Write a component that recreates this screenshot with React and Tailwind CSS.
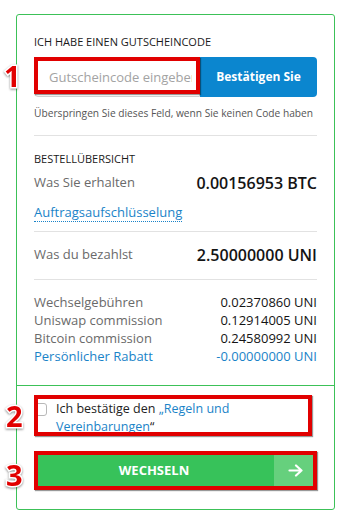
import React from 'react';

const Num = ({ n, className }) => (
  <div
    className={
      'absolute font-bold text-[29px] leading-none text-[#e10000] [paint-order:stroke_fill] [-webkit-text-stroke:3px_#fff] [filter:drop-shadow(0_1px_1px_rgba(0,0,0,0.45))] ' +
      className
    }
  >
    {n}
  </div>
);

const Row = ({ label, value, blue }) => (
  <div className="flex justify-between items-center h-[18px] text-[13px] leading-[18px]">
    <span className={blue ? 'text-[#1a83c8]' : 'text-[#6a6a6a]'}>{label}</span>
    <span className={blue ? 'text-[#1a83c8]' : 'text-[#141414] font-medium'}>{value}</span>
  </div>
);

export default function App() {
  return (
    <div className="relative w-[352px] h-[525px] bg-white overflow-hidden font-['Open_Sans',sans-serif]">
      <div className="ml-[16px] mt-[14px] w-[319px] h-[496px] border border-[#3cc158] rounded-[3px]">
        {/* Gutschein + Übersicht */}
        <div className="px-[17px] pt-[19px] h-[370px]">
          <div className="text-[11px] leading-[16px] text-[#1a1a1a] uppercase">Ich habe einen Gutscheincode</div>

          <div className="relative flex mt-[7px] h-[40px]">
            <input
              type="text"
              placeholder="Gutscheincode eingeben"
              className="w-[166px] h-full border border-[#cfcfcf] rounded-l-[4px] pl-[14px] pr-[7px] text-[13px] text-[#333] placeholder:text-[#a3a3a3] outline-none"
            />
            <button className="flex-1 h-full bg-[#0b86cf] rounded-r-[4px] text-white font-bold text-[12px]">
              Bestätigen Sie
            </button>
            <div className="absolute left-0 top-0 w-[166px] h-[37px] border-[4px] border-[#e10000] shadow-[1px_1px_1px_rgba(0,0,0,0.4)]" />
          </div>

          <div className="mt-[8px] text-[10.2px] leading-[16px] text-[#555]">
            Überspringen Sie dieses Feld, wenn Sie keinen Code haben
          </div>

          <div className="mt-[14px] h-px bg-[#e2e2e2]" />

          <div className="mt-[15px] text-[11px] leading-[16px] text-[#1a1a1a] uppercase">Bestellübersicht</div>
          <div className="mt-[5px] flex justify-between items-center h-[22px]">
            <span className="text-[13px] text-[#6a6a6a]">Was Sie erhalten</span>
            <span className="text-[16px] font-semibold text-[#141414]">0.00156953 BTC</span>
          </div>
          <div className="mt-[5px] h-[18px]">
            <span className="inline-block text-[13px] leading-[17px] text-[#1a83c8] border-b border-dotted border-[#1a83c8]">
              Auftragsaufschlüsselung
            </span>
          </div>

          <div className="mt-[14px] h-px bg-[#e2e2e2]" />

          <div className="mt-[12px] flex justify-between items-center h-[22px]">
            <span className="text-[13px] text-[#6a6a6a]">Was du bezahlst</span>
            <span className="text-[16px] font-semibold text-[#141414]">2.50000000 UNI</span>
          </div>

          <div className="mt-[13px] h-px bg-[#e2e2e2]" />

          <div className="mt-[13px]">
            <Row label="Wechselgebühren" value="0.02370860 UNI" />
            <Row label="Uniswap commission" value="0.12914005 UNI" />
            <Row label="Bitcoin commission" value="0.24580992 UNI" />
            <Row label="Persönlicher Rabatt" value="-0.00000000 UNI" blue />
          </div>
        </div>

        {/* Bestätigen + Wechseln */}
        <div className="border-t border-[#3cc158] px-[17px] pt-[9px]">
          <div className="relative h-[41px] pt-[5px]">
            <label className="flex items-start gap-[9px] text-[12.5px] leading-[18px] text-[#222]">
              <span className="mt-[3px] w-[13px] h-[13px] shrink-0 border border-[#b8b8b8] rounded-[3px] bg-white" />
              <span className="w-[240px]">
                Ich bestätige den <span className="text-[#1a83c8]">„Regeln und</span>{' '}
                <span className="text-[#1a83c8]">Vereinbarungen</span>“
              </span>
            </label>
            <div className="absolute left-0 top-0 w-[278px] h-[41px] border-[4px] border-[#e10000] shadow-[1px_1px_1px_rgba(0,0,0,0.4)]" />
          </div>

          <div className="relative mt-[15px] h-[39px]">
            <button className="flex w-full h-full rounded-[3px] overflow-hidden">
              <span className="flex-1 h-full bg-[#37c25a] flex items-center justify-center text-white font-bold text-[13px]">
                WECHSELN
              </span>
              <span className="w-[43px] h-full bg-[#66d07d] flex items-center justify-center">
                <svg width="15" height="13" viewBox="0 0 15 13" fill="none" stroke="#fff" strokeWidth="2.2" strokeLinecap="round" strokeLinejoin="round">
                  <path d="M1.5 6.5h12M8 1.5l5.5 5-5.5 5" />
                </svg>
              </span>
            </button>
            <div className="absolute inset-0 border-[4px] border-[#e10000] shadow-[1px_1px_1px_rgba(0,0,0,0.4)]" />
          </div>
        </div>
      </div>

      <Num n="1" className="left-[4px] top-[61px]" />
      <Num n="2" className="left-[6px] top-[401px]" />
      <Num n="3" className="left-[6px] top-[460px]" />
    </div>
  );
}
